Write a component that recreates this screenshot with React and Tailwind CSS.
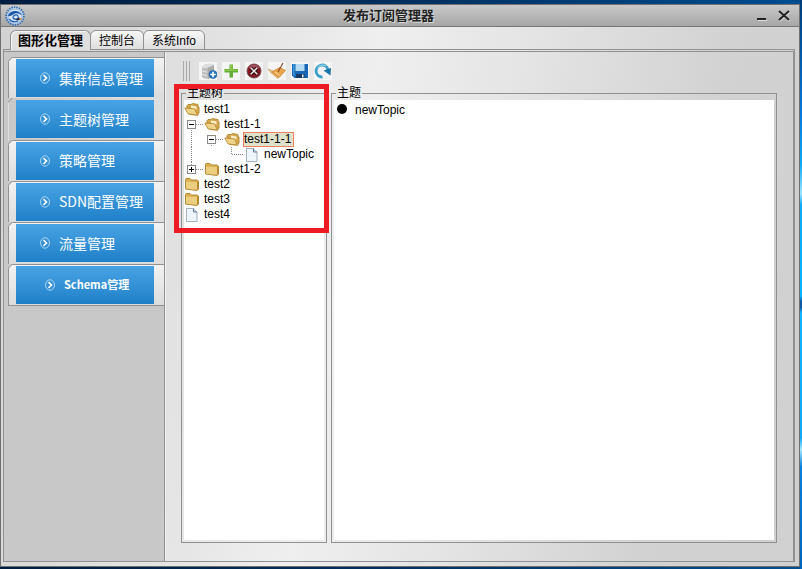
import React from 'react';

const NAV = [
  { label: '集群信息管理' },
  { label: '主题树管理', selected: true },
  { label: '策略管理' },
  { label: 'SDN配置管理' },
  { label: '流量管理' },
  { label: 'Schema管理', small: true },
];

const TREE = [
  { label: 'test1', cells: [], icon: 'open' },
  { label: 'test1-1', cells: ['minus'], icon: 'open' },
  { label: 'test1-1-1', cells: ['line', 'minus'], icon: 'open', selected: true },
  { label: 'newTopic', cells: ['line', 'blank', 'elbow'], icon: 'file' },
  { label: 'test1-2', cells: ['plus'], icon: 'closed' },
  { label: 'test2', cells: [], icon: 'closed' },
  { label: 'test3', cells: [], icon: 'closed' },
  { label: 'test4', cells: [], icon: 'file' },
];

function Logo() {
  return (
    <svg width="20" height="20" viewBox="0 0 20 20" aria-hidden="true" className="shrink-0">
      <circle cx="10" cy="10" r="8.800" fill="#cfdcec" stroke="#2d68ae" strokeWidth="1.800" strokeDasharray="1.500 1" />
      <circle cx="10" cy="10" r="7" fill="#dce8f5" stroke="#6f9dcd" strokeWidth="0.600" />
      <path d="M3 10c1-4 6-6 10-4.500 2 .8 3.500 2.500 3.500 4-3-2.500-6-3-9-.5-1.500 1-3 1.500-4.500 1z" fill="#1c58a8" />
      <path d="M4 13c2 2.500 6 3.500 9 2M8 11c1-2.500 4-2.500 5-1 1 2-1 3.500-3 3-1 0-2-1-2-2" fill="none" stroke="#2a66b0" strokeWidth="1.300" />
      <path d="M10 13.500l4.500-2 .5 2.500-3 .5z" fill="#22304a" />
      <path d="M14.500 13l2-.5" stroke="#e0862b" strokeWidth="1.500" />
    </svg>
  );
}

function ArrowBadge() {
  return (
    <svg width="12" height="12" viewBox="0 0 12 12" fill="none" aria-hidden="true" className="shrink-0">
      <ellipse cx="6" cy="6" rx="4.500" ry="5.200" stroke="#a9d6f5" strokeWidth="1" />
      <path d="M4.500 3.200L7.500 6 4.500 8.800" stroke="#fff" strokeWidth="1.600" />
    </svg>
  );
}

function NodeIcon({ kind }) {
  if (kind === 'file') {
    return (
      <svg width="16" height="15" viewBox="0 0 16 15" aria-hidden="true" className="shrink-0">
        <path d="M2.500 1.500h7l3.500 3.500v9.500H2.500z" fill="#eef5fb" stroke="#a5b1bd" />
        <path d="M9.500 1.500V5h3.500" fill="#c5dcee" stroke="#5d7c9b" />
      </svg>
    );
  }
  if (kind === 'closed') {
    return (
      <svg width="16" height="15" viewBox="0 0 16 15" aria-hidden="true" className="shrink-0">
        <path d="M1.500 2.500q0-1 1-1h3.500l1.500 1.500h5.500l1.500 1v8l-1.500 1.500L1.500 12z" fill="#d9ae4c" stroke="#b58a35" />
        <path d="M2 4.500l11 .5v7.800L2 11.500z" fill="#ecce80" />
        <path d="M13 5l1.500-1v8L13 13.500z" fill="#b98a30" />
      </svg>
    );
  }
  return (
    <svg width="16" height="15" viewBox="0 0 16 15" aria-hidden="true" className="shrink-0">
      <path d="M3 8V3.500l1-1h3l1.500-1 5.500 1v2l1 .5v6L13.500 13 6 12.500z" fill="#d3a74a" stroke="#b58a35" />
      <path d="M7 3.500l5.500 1v3H7z" fill="#f9efcb" />
      <path d="M.8 6l9.700.8 3 6.500L4 11.800z" fill="#efd48c" stroke="#b5872c" strokeWidth="0.900" />
    </svg>
  );
}

function TreeCell({ kind }) {
  const dots = { stroke: '#8a8a8a', strokeDasharray: '1 1' };
  if (kind === 'minus' || kind === 'plus') {
    return (
      <button type="button" aria-label={kind === 'minus' ? '折叠' : '展开'} className="block shrink-0">
        <svg width="20" height="15" viewBox="0 0 20 15" shapeRendering="crispEdges">
          {kind === 'plus' && <path d="M7.500 0v3" {...dots} />}
          <path d="M12 7.500h8" {...dots} />
          <rect x="3.500" y="3.500" width="8" height="8" fill="#fff" stroke="#8a8a8a" />
          <path d={kind === 'plus' ? 'M5 7.500h5M7.500 5v5' : 'M5 7.500h5'} stroke="#000" />
          {kind === 'minus' && <path d="M7.500 13v2" {...dots} />}
        </svg>
      </button>
    );
  }
  return (
    <svg width="20" height="15" viewBox="0 0 20 15" shapeRendering="crispEdges" aria-hidden="true" className="shrink-0">
      {kind === 'line' && <path d="M7.500 0v15" {...dots} />}
      {kind === 'elbow' && <path d="M7.500 0v7.500h12.500" fill="none" {...dots} />}
    </svg>
  );
}

const TOOLS = [
  {
    name: '新建数据库',
    art: (
      <>
        <path d="M3 5.500Q3.500 3 8 2t7 1v11l-7 3q-4-.5-5-2z" fill="#bdbdbd" />
        <path d="M3 5.500Q3.500 3 8 2t7 1l-6 2.500q-4 1.500-6 0z" fill="#dedede" />
        <path d="M9 6l6-2.500v10.500l-6 3z" fill="#a8a8a8" />
        <path d="M3.500 9l4 1M3.500 12.500l4 1" stroke="#f0f0f0" />
        <circle cx="14" cy="12.500" r="4" fill="#2777bd" stroke="#1d5f9e" strokeWidth="0.600" />
        <path d="M14 9.800v5.400M11.300 12.500h5.400" stroke="#fff" strokeWidth="1.600" />
      </>
    ),
  },
  {
    name: '添加',
    art: (
      <>
        <path d="M7.500 2.500h3.500v4.500h5v3.500h-5v5H7.500v-5h-5V7h5z" fill="#62ad35" />
        <path d="M8 3h2.500v4.500h5V9h-13V7.500H8z" fill="#86c846" />
      </>
    ),
  },
  {
    name: '删除',
    art: (
      <>
        <circle cx="9" cy="9" r="7" fill="#86151f" stroke="#6d4b4e" />
        <path d="M3.500 6a6.300 6.300 0 0 1 11 0q-5.500 2.500-11 0z" fill="#a8505a" />
        <path d="M5.700 5.700l6.600 6.600M12.300 5.700l-6.600 6.600" stroke="#2c0d12" strokeWidth="3.600" />
        <path d="M5.700 5.700l6.600 6.600M12.300 5.700l-6.600 6.600" stroke="#f3e8e8" strokeWidth="1.500" />
      </>
    ),
  },
  {
    name: '清空',
    art: (
      <>
        <path d="M0 7l5 2 6 5-1 2.500L3 11z" fill="#e6bd80" stroke="#d29a50" strokeWidth="0.600" />
        <path d="M4 10l7.500-4.500 6 3L11 15.500z" fill="#eda650" stroke="#c9812e" strokeWidth="0.800" />
        <path d="M7 10l4.500 3.500" stroke="#fbdca8" />
        <path d="M10 10L15 1" stroke="#8d4a20" strokeWidth="1.200" />
      </>
    ),
  },
  {
    name: '保存',
    art: (
      <>
        <path d="M1 2h16v14H3.500L1 13.500z" fill="#1668b4" />
        <path d="M2 2h1.500v12L2 13z" fill="#3f9bdc" />
        <path d="M4.500 2h9v7h-9z" fill="#b5dcf3" />
        <path d="M5 12h8.500v4H5z" fill="#163a60" />
        <path d="M11 12.500h1.500v3H11z" fill="#e8f2f8" />
      </>
    ),
  },
  {
    name: '刷新',
    art: (
      <>
        <path d="M8.500 15A6 6 0 1 1 14 8" fill="none" stroke="#3a9fc9" strokeWidth="2.800" />
        <path d="M3.500 6.500A6 6 0 0 1 12 4" fill="none" stroke="#8fd3e8" strokeWidth="1.200" />
        <path d="M9.500 8.500l7.500-2.500-.5 7.500z" fill="#1a75a8" />
      </>
    ),
  },
];

function GroupBox({ title, className, children }) {
  return (
    <fieldset className={`flex min-h-0 min-w-0 flex-col border border-[#919191] px-[2px] pb-[2px] ${className}`}>
      <legend className="ml-[2px] px-px text-[12px] leading-[14px]">{title}</legend>
      {children}
    </fieldset>
  );
}

export default function App() {
  return (
    <div className="flex h-screen bg-linear-to-r from-[#001d40] via-[#00305f] to-[#004d91] font-['Liberation_Sans','Noto_Sans_CJK_SC',sans-serif] text-[12px] text-black">
      <main className="mt-1 mb-[2px] flex min-w-0 flex-1 flex-col border border-[#707070] bg-[linear-gradient(100deg,#d2d2d2_0%,#dedede_20%,#efefef_43%,#e4e4e4_60%,#d2d2d2_82%,#d0d0d0_100%)]">
        <header className="flex h-[22px] shrink-0 items-center border-b border-[#777] bg-linear-to-b from-[#c9c9c9] to-[#a6a6a6] px-1">
          <Logo />
          <h1 className="flex-1 pl-px text-center text-[13px] leading-5 font-bold text-[#222] [text-shadow:1px_1px_0_#ddd]">发布订阅管理器</h1>
          <button type="button" aria-label="最小化" className="flex w-[22px] justify-center">
            <svg width="10" height="14" viewBox="0 0 10 14"><path d="M0 10h9" stroke="#222" strokeWidth="2" /><path d="M1 11.500h9" stroke="#ddd" /></svg>
          </button>
          <button type="button" aria-label="关闭" className="flex w-[22px] justify-center">
            <svg width="14" height="14" viewBox="0 0 14 14"><path d="M2.500 3l10 9M12.500 3l-10 9" stroke="#ddd" strokeWidth="2" /><path d="M2 2l10 9M12 2L2 11" stroke="#222" strokeWidth="2" /></svg>
          </button>
        </header>

        <div className="flex min-h-0 flex-1 flex-col pr-1 pb-1 pl-[2px]">
          <nav role="tablist" className="z-10 -mb-px flex h-[23px] shrink-0 items-end pl-[7px]">
            <button role="tab" aria-selected="true" type="button" className="h-5 rounded-t-md border border-b-0 border-[#919191] bg-[#dfdfdf] px-[7px] text-[13px] leading-5 font-bold shadow-[inset_1px_1px_0_#f5f5f5]">图形化管理</button>
            <button role="tab" aria-selected="false" type="button" className="-ml-px h-5 rounded-t-md border border-[#919191] bg-linear-to-b from-[#f7f7f7] to-[#dedede] px-2 leading-5">控制台</button>
            <button role="tab" aria-selected="false" type="button" className="-ml-px h-5 rounded-t-md border border-[#919191] bg-linear-to-b from-[#f7f7f7] to-[#dedede] px-2 leading-5">系统Info</button>
          </nav>

          <div className="flex min-h-0 flex-1 border border-t-3 border-r-2 border-[#919191] [border-top-style:double]">
            <aside className="w-[161px] shrink-0 border-r border-[#919191] bg-[#c8c8c8] pt-[5px] pl-1">
              <div className="flex h-[249px] flex-col border-b border-[#919191]">
                {NAV.map((item) => (
                  <div
                    key={item.label}
                    className={`relative flex flex-1 border-t border-l pt-px pl-[7px] ${item.selected ? 'border-transparent bg-linear-to-r from-[#c8c8c8] to-[#dedede]' : 'border-[#919191] bg-linear-to-b from-[#f2f2f2] to-[#dcdcdc]'}`}
                  >
                    <svg width="5" height="5" viewBox="0 0 5 5" className="absolute -top-px -left-px" aria-hidden="true">
                      <path d="M0 0h5L0 5z" fill="#c8c8c8" /><path d="M0 4.500L4.500 0" stroke="#919191" />
                    </svg>
                    <button
                      type="button"
                      className={`flex h-[38px] w-[138px] items-center gap-2 bg-linear-to-b from-[#48a3e4] to-[#1e80c8] font-['Noto_Sans_CJK_SC',sans-serif] whitespace-nowrap text-white ${item.small ? 'pl-7 text-[11px] font-bold' : 'pl-[23px] text-[14px]'}`}
                    >
                      <ArrowBadge />
                      {item.label}
                    </button>
                  </div>
                ))}
              </div>
            </aside>

            <section className="flex min-w-0 flex-1 flex-col border-l border-[#f2f2f2] pt-[9px] pr-4 pb-[18px] pl-[15px]">
              <div className="flex h-5 shrink-0 items-center gap-[5px]">
                <span className="mr-1 ml-[2px] flex h-5 gap-[2px]">
                  <i className="w-px bg-[#ababab]" /><i className="w-px bg-[#ababab]" /><i className="w-px bg-[#ababab]" />
                </span>
                {TOOLS.map((tool) => (
                  <button key={tool.name} type="button" aria-label={tool.name} className="bg-[#f5f5f5]">
                    <svg width="18" height="18" viewBox="0 0 18 18">{tool.art}</svg>
                  </button>
                ))}
              </div>

              <div className="mt-[5px] flex min-h-0 flex-1 gap-1">
                <div className="relative flex w-[146px] shrink-0">
                  <GroupBox title="主题树" className="flex-1">
                    <ul className="h-full bg-white pt-[2px]">
                      {TREE.map((node) => (
                        <li key={node.label} className="flex h-[15px] items-center">
                          {node.cells.map((cell, i) => <TreeCell key={i} kind={cell} />)}
                          <NodeIcon kind={node.icon} />
                          <span className={`ml-[3px] border leading-[13px] whitespace-nowrap ${node.selected ? 'border-[#f08060] bg-[#dfe2cb] pr-[2px]' : 'border-transparent'}`}>{node.label}</span>
                        </li>
                      ))}
                    </ul>
                  </GroupBox>
                  <div className="pointer-events-none absolute -top-[2px] -right-[2px] -left-[7px] h-[149px] border-5 border-[#ed1c24]" />
                </div>

                <GroupBox title="主题" className="flex-1">
                  <ul className="h-full bg-white pt-[2px]">
                    <li className="flex h-[15px] items-center gap-[5px]">
                      <svg width="16" height="15" viewBox="0 0 16 15" aria-hidden="true"><circle cx="8" cy="7" r="5" fill="#000" /></svg>
                      <span>newTopic</span>
                    </li>
                  </ul>
                </GroupBox>
              </div>
            </section>
          </div>
        </div>
      </main>
      <div className="w-[2px] shrink-0 bg-[linear-gradient(#003d78_0%,#0878dc_20%,#10aaf5_29%,#9be4ff_34%,#10aaf5_36%,#08b4ff_52%,#1059a5_53%,#1059a5_54%,#12b4ff_55%,#12a8f5_77%,#a5e8ff_79%,#0a80dd_82%,#0065bc_100%)]" />
    </div>
  );
}
